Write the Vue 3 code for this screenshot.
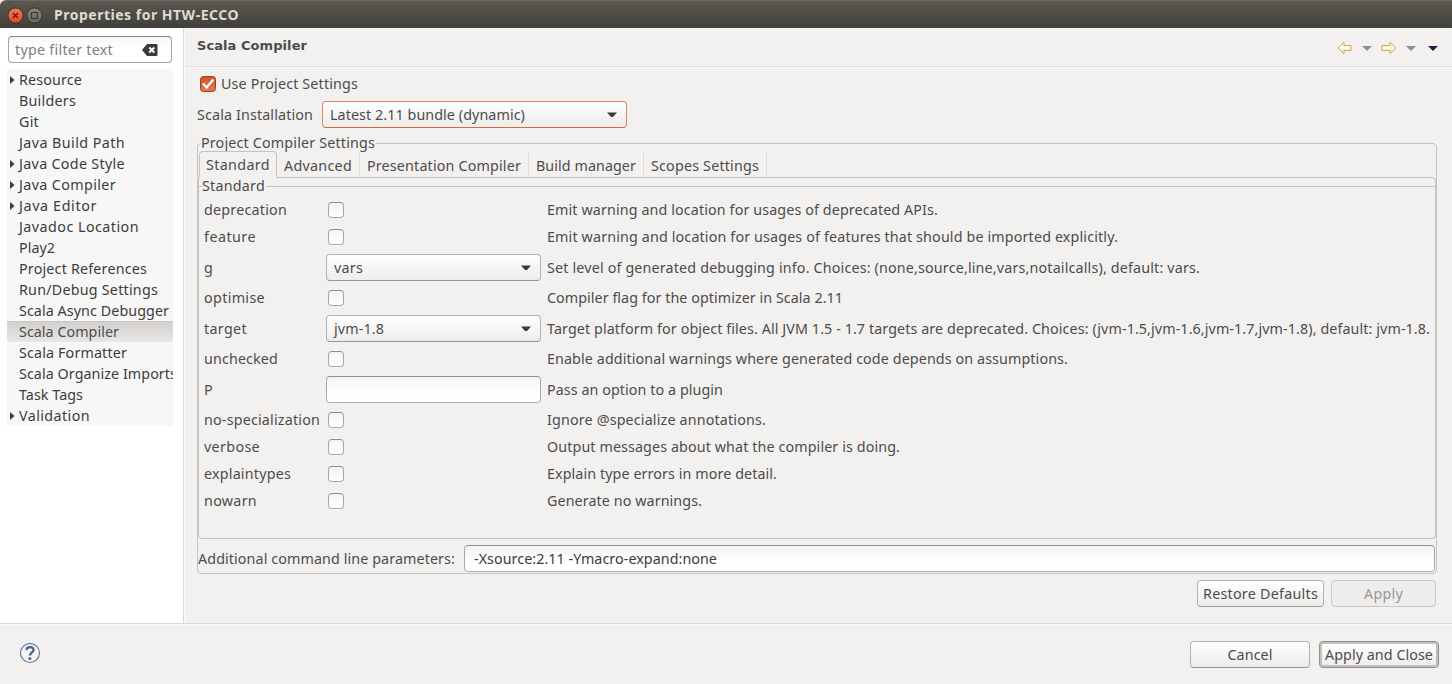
<script setup>
const pages = [
  { name: 'Resource', w: 63, open: true },
  { name: 'Builders', w: 57 },
  { name: 'Git', w: 20 },
  { name: 'Java Build Path', w: 106 },
  { name: 'Java Code Style', w: 106, open: true },
  { name: 'Java Compiler', w: 97, open: true },
  { name: 'Java Editor', w: 78, open: true },
  { name: 'Javadoc Location', w: 120 },
  { name: 'Play2', w: 36 },
  { name: 'Project References', w: 128 },
  { name: 'Run/Debug Settings', w: 139 },
  { name: 'Scala Async Debugger', w: 150 },
  { name: 'Scala Compiler', w: 100, active: true },
  { name: 'Scala Formatter', w: 108 },
  { name: 'Scala Organize Imports', w: 158 },
  { name: 'Task Tags', w: 64 },
  { name: 'Validation', w: 71, open: true },
]
const tabs = [
  { name: 'Standard', w: 64, box: 78, active: true },
  { name: 'Advanced', w: 68, box: 83 },
  { name: 'Presentation Compiler', w: 154, box: 169 },
  { name: 'Build manager', w: 100, box: 115 },
  { name: 'Scopes Settings', w: 108, box: 123 },
]
const options = [
  { name: 'deprecation', w: 83, type: 'check', text: 'Emit warning and location for usages of deprecated APIs.', tw: 391 },
  { name: 'feature', w: 52, type: 'check', text: 'Emit warning and location for usages of features that should be imported explicitly.', tw: 571 },
  { name: 'g', w: 9, type: 'combo', value: 'vars', vw: 29, text: 'Set level of generated debugging info. Choices: (none,source,line,vars,notailcalls), default: vars.', tw: 653 },
  { name: 'optimise', w: 61, type: 'check', text: 'Compiler flag for the optimizer in Scala 2.11', tw: 296 },
  { name: 'target', w: 43, type: 'combo', value: 'jvm-1.8', vw: 50, text: 'Target platform for object files. All JVM 1.5 - 1.7 targets are deprecated. Choices: (jvm-1.5,jvm-1.6,jvm-1.7,jvm-1.8), default: jvm-1.8.', tw: 883 },
  { name: 'unchecked', w: 74, type: 'check', text: 'Enable additional warnings where generated code depends on assumptions.', tw: 521 },
  { name: 'P', w: 9, type: 'field', text: 'Pass an option to a plugin', tw: 176 },
  { name: 'no-specialization', w: 116, type: 'check', text: 'Ignore @specialize annotations.', tw: 219 },
  { name: 'verbose', w: 56, type: 'check', text: 'Output messages about what the compiler is doing.', tw: 353 },
  { name: 'explaintypes', w: 87, type: 'check', text: 'Explain type errors in more detail.', tw: 230 },
  { name: 'nowarn', w: 53, type: 'check', text: 'Generate no warnings.', tw: 155 },
]

// Tracks a label so that it fills its measured width.
const vFit = {
  mounted(el, { value }) {
    const natural = el.getBoundingClientRect().width
    const n = el.textContent.length
    el.style.letterSpacing = `${(value - natural) / n}px`
  },
}
</script>

<template>
  <div class="window">
    <header class="titlebar">
      <svg class="winbtns" width="36" height="18" viewBox="0 0 36 18">
        <defs>
          <linearGradient id="closeFill" x1="0" y1="0" x2="0" y2="1"><stop offset="0" stop-color="#f7795a" /><stop offset="1" stop-color="#e4481a" /></linearGradient>
          <linearGradient id="maxFill" x1="0" y1="0" x2="0" y2="1"><stop offset="0" stop-color="#8b8a82" /><stop offset="1" stop-color="#66655e" /></linearGradient>
        </defs>
        <circle cx="8.5" cy="8.5" r="7.6" fill="url(#closeFill)" stroke="#33322d" />
        <path d="M6 6l5 5M11 6l-5 5" stroke="#4b2014" stroke-width="1.3" />
        <circle cx="27.5" cy="8.5" r="7.6" fill="url(#maxFill)" stroke="#33322d" />
        <rect x="24.5" y="5.5" width="6" height="6" fill="none" stroke="#3b3a35" stroke-width="1.2" />
      </svg>
      <span v-fit="185" class="title">Properties for HTW-ECCO</span>
    </header>

    <div class="body">
      <aside class="sidebar">
        <div class="filter">
          <span v-fit="98">type filter text</span>
          <svg width="16" height="12" viewBox="0 0 16 12">
            <path d="M0 6L5 0h9.500q1 0 1 1v10q0 1-1 1H5z" fill="#3c3b37" />
            <path d="M7.300 3.500l5 5M12.300 3.500l-5 5" stroke="#fff" stroke-width="2" />
          </svg>
        </div>
        <ul class="tree">
          <li v-for="p in pages" :key="p.name" :class="{ active: p.active }">
            <i class="twist"><svg v-if="p.open" width="5" height="8" viewBox="0 0 5 8"><path d="M0 0L4.500 4L0 8z" fill="#3c3b37" /></svg></i>
            <span v-fit="p.w">{{ p.name }}</span>
          </li>
        </ul>
      </aside>

      <main class="main">
        <div class="pagehead">
          <h1><span v-fit="110">Scala Compiler</span></h1>
          <svg class="nav" width="104" height="14" viewBox="0 0 104 14">
            <defs><linearGradient id="arrowFill" x1="0" y1="0" x2="0" y2="1"><stop offset="0" stop-color="#fffdf2" /><stop offset="1" stop-color="#fbeec2" /></linearGradient></defs>
            <path d="M2 7L8 1.300V4.500H15V9.500H8V12.700z" fill="url(#arrowFill)" stroke="#cfa661" stroke-linejoin="round" />
            <path d="M26 5h10L31 10z" fill="#908f8b" />
            <path d="M60 7L54 1.300V4.500H46V9.500H54V12.700z" fill="url(#arrowFill)" stroke="#cfa661" stroke-linejoin="round" />
            <path d="M70 5h10L75 10z" fill="#908f8b" />
            <path d="M92 5h10L97 10z" fill="#2b1848" />
          </svg>
        </div>

        <div class="content">
          <label class="use">
            <svg width="16" height="16" viewBox="0 0 16 16">
              <defs><linearGradient id="checkFill" x1="0" y1="0" x2="0" y2="1"><stop offset="0" stop-color="#d0532b" /><stop offset="1" stop-color="#e47b54" /></linearGradient></defs>
              <rect x=".5" y=".5" width="15" height="15" rx="3" fill="url(#checkFill)" stroke="#9f401f" />
              <path d="M3 7.500L6.700 11.500L13.300 3.500" fill="none" stroke="#fff" stroke-width="2.400" />
            </svg>
            <span v-fit="137">Use Project Settings</span>
          </label>
          <div class="install">
            <span class="cap"><span v-fit="116">Scala Installation</span></span>
            <div class="combo focus">
              <span v-fit="195">Latest 2.11 bundle (dynamic)</span>
              <svg width="10" height="6" viewBox="0 0 10 6"><path d="M0 .5h10L6 5H4z" fill="#3c3b37" /></svg>
            </div>
          </div>

          <section class="group outer">
            <div class="legend"><span v-fit="174">Project Compiler Settings</span></div>
            <nav class="tabs">
              <div v-for="t in tabs" :key="t.name" class="tab" :class="{ on: t.active }" :style="{ width: t.box + 'px' }">
                <span v-fit="t.w">{{ t.name }}</span>
              </div>
            </nav>
            <div class="tabpage">
              <section class="group inner">
                <div class="legend"><span v-fit="63">Standard</span></div>
                <div v-for="o in options" :key="o.name" class="row" :class="{ tall: o.type !== 'check' }">
                  <div class="name"><span v-fit="o.w">{{ o.name }}</span></div>
                  <div class="control">
                    <div v-if="o.type === 'check'" class="check"></div>
                    <div v-else-if="o.type === 'combo'" class="combo">
                      <span v-fit="o.vw">{{ o.value }}</span>
                      <svg width="10" height="6" viewBox="0 0 10 6"><path d="M0 .5h10L6 5H4z" fill="#3c3b37" /></svg>
                    </div>
                    <div v-else class="field"></div>
                  </div>
                  <div class="desc"><span v-fit="o.tw">{{ o.text }}</span></div>
                </div>
              </section>
            </div>
            <div class="extra">
              <div class="extracap"><span v-fit="257">Additional command line parameters:</span></div>
              <div class="field"><span v-fit="243">-Xsource:2.11 -Ymacro-expand:none</span></div>
            </div>
          </section>

          <div class="actions">
            <div class="btn restore"><span v-fit="115">Restore Defaults</span></div>
            <div class="btn apply"><span v-fit="39">Apply</span></div>
          </div>
        </div>
      </main>
    </div>

    <footer class="footer">
      <svg width="21" height="21" viewBox="0 0 21 21">
        <circle cx="10" cy="10" r="9.500" fill="#f4f5f7" stroke="#5f7396" stroke-width="1.100" />
        <path d="M6.500 7.100C6.500 3.100 13.500 3.100 13.500 6.900C13.500 9.400 10 9.400 10 12.500" fill="none" stroke="#4d6489" stroke-width="2.400" />
        <circle cx="9.900" cy="15.400" r="1.500" fill="#4d6489" />
      </svg>
      <div class="btn cancel"><span v-fit="45">Cancel</span></div>
      <div class="btn default"><span v-fit="108">Apply and Close</span></div>
    </footer>
  </div>
</template>

<style>
body { background: #f2f1f0; }
</style>
<style scoped>
* { box-sizing: border-box; }
.window { width: 1452px; height: 684px; display: flex; flex-direction: column; background: #f2f1f0; color: #4c4c4c; font: 14.3px/20px "Noto Sans", "Open Sans", sans-serif; white-space: nowrap; overflow: hidden; }
.titlebar { height: 28px; flex: none; display: flex; align-items: center; padding: 1px 0 0 7px; background: linear-gradient(#5a5850, #403f3a); border-top: 1px solid #6a6860; border-radius: 6px 0 0 0; }
.winbtns { margin-top: 1px; }
.title { margin-left: 11px; font-weight: 700; font-size: 14px; color: #dfdbd2; }
.body { height: 595px; display: flex; }
.sidebar { width: 184px; flex: none; background: #fff; border-right: 1px solid #d9d8d7; padding: 8px 0 0 7px; }
.filter { width: 164px; height: 27px; margin-left: 1px; border: 1px solid #a5a4a2; border-top-color: #858482; border-radius: 4px; display: flex; align-items: center; justify-content: space-between; padding: 0 13px 0 6px; color: #808080; background: linear-gradient(#f6f6f6, #fff 40%); }
.tree { list-style: none; margin: 6px 0 0; padding: 0; width: 166px; background: #f7f7f7; overflow: hidden; color: #3c3c3c; }
.tree li { height: 21px; display: flex; align-items: center; }
.tree li.active { background: linear-gradient(#d3d0cd, #e8e7e6); border-top: 1px solid #c8c5c2; color: #4c4c4c; }
.twist { width: 12px; flex: none; display: flex; padding-left: 3px; }
.main { flex: 1; min-width: 0; border-left: 1px solid #f9f9f9; }
.pagehead { height: 39px; display: flex; justify-content: space-between; border-bottom: 1px solid #dddcdb; box-shadow: 0 1px #fafafa; padding: 8px 12px 0 12px; }
h1 { margin: 0; font: 700 13px/20px "DejaVu Sans", sans-serif; }
.nav { margin-top: 5px; }
.content { padding: 7px 15px 0 12px; }
.use { display: flex; align-items: center; gap: 5px; height: 20px; padding-left: 3px; }
.install { display: flex; align-items: center; height: 27px; margin-top: 7px; }
.cap { width: 125px; }
.combo, .field, .btn { height: 27px; border: 1px solid #b3b2b0; border-radius: 4px; display: flex; align-items: center; }
.combo { width: 215px; justify-content: space-between; padding: 0 9px 0 7px; background: linear-gradient(#fefefe, #eeedec); border-bottom-color: #979694; }
.combo.focus { width: 305px; border-color: #dc8562; border-bottom-color: #cf6b41; }
.group { border: 1px solid #c4c3c2; border-radius: 4px; position: relative; }
.legend { position: absolute; left: 3px; top: -11px; height: 20px; background: #f2f1f0; padding-right: 1px; }
.outer { height: 431px; margin-top: 15px; padding-top: 7px; }
.tabs { height: 27px; display: flex; align-items: flex-end; margin-bottom: -1px; position: relative; z-index: 1; padding-left: 1px; }
.tab { height: 26px; padding: 4px 0 0 7px; border: solid #c4c3c2; border-width: 0 1px 1px 0; border-right-color: #dddcdb; }
.tab.on { height: 27px; border: 1px solid #c4c3c2; border-bottom-color: #f2f1f0; border-radius: 4px 4px 0 0; padding: 3px 0 0 6px; background: #f2f1f0; }
.tabpage { height: 362px; border: 1px solid #c4c3c2; border-radius: 0 4px 4px 4px; padding-top: 8px; }
.inner { height: 352px; border-width: 1px 0 0; border-radius: 0; padding: 12px 0 0 5px; display: flex; flex-direction: column; gap: 5px; }
.inner .legend { left: 3px; }
.row { height: 22px; display: flex; align-items: center; flex: none; }
.row.tall { height: 29px; }
.name { width: 122px; flex: none; }
.control { width: 221px; flex: none; }
.check { width: 16px; height: 16px; margin-left: 2px; border: 1px solid #a9a8a7; border-top-color: #8f8e8d; border-radius: 4px; background: linear-gradient(#f4f4f4, #fff); }
.field { width: 215px; background: linear-gradient(#f4f4f4, #fff 70%); border-color: #92918f #a9a8a6 #b0afad; }
.extra { display: flex; align-items: center; height: 27px; margin-top: 6px; }
.extracap { width: 266px; flex: none; }
.extra .field { flex: 1; width: auto; padding-left: 9px; margin-right: 1px; color: #3c3c3c; }
.actions { display: flex; justify-content: flex-end; gap: 7px; margin: 6px 1px 0 0; }
.btn { justify-content: center; background: linear-gradient(#fff, #edecea); border-bottom-color: #999896; flex: none; }
.restore { width: 127px; }
.apply { width: 105px; color: #9b9793; background: #eeedec; border-color: #cac9c8; }
.footer { height: 61px; border-top: 1px solid #d9d8d7; box-shadow: inset 0 1px #fafafa; display: flex; align-items: flex-start; padding: 17px 13px 0 20px; }
.footer svg { margin-top: 2px; margin-right: auto; }
.cancel { width: 120px; margin-right: 9px; }
.default { width: 120px; border-color: #908f8d; box-shadow: inset 0 0 0 2px #c2c1bf; }
</style>
